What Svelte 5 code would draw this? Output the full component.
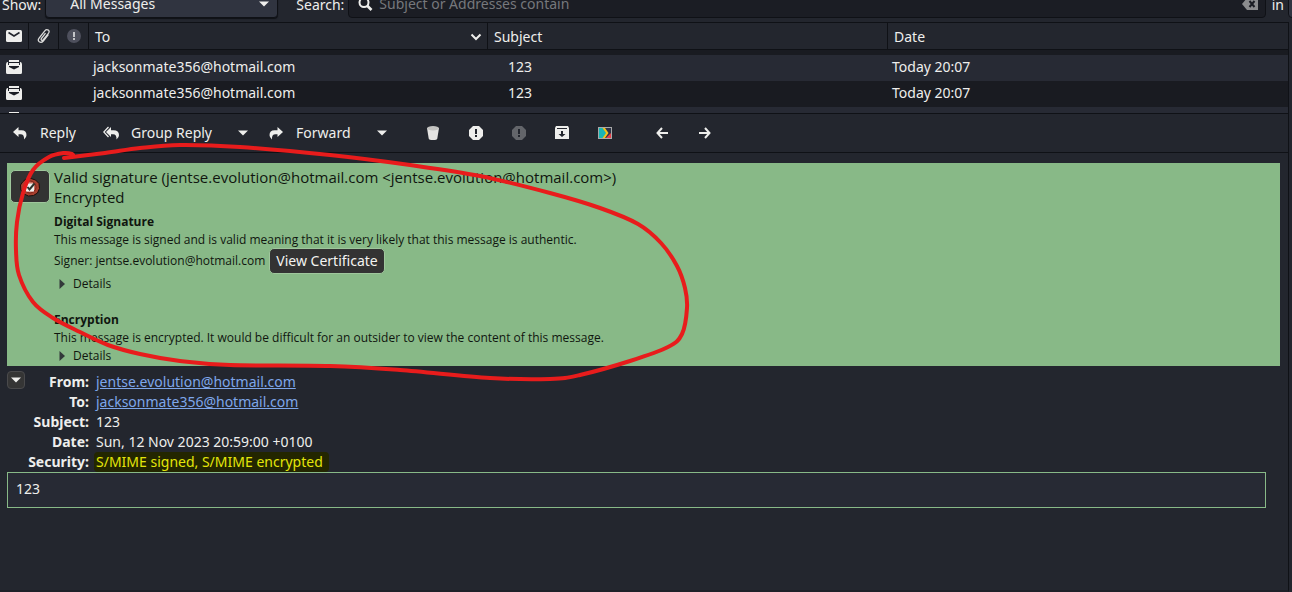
<script>
  const messages = [
    { to: 'jacksonmate356@hotmail.com', subject: '123', date: 'Today 20:07' },
    { to: 'jacksonmate356@hotmail.com', subject: '123', date: 'Today 20:07' },
    { to: '', subject: '', date: '' }
  ];

  // Points of the freehand marker loop, joined by a smooth curve.
  const loop = [
    [73, 156], [72, 154], [64, 153], [49, 157], [33, 170], [23, 193], [17, 222], [16, 250],
    [19, 275], [33, 302], [53, 318], [80, 332], [108, 345], [140, 354], [180, 361], [230, 365],
    [330, 366], [400, 370], [490, 378], [550, 379], [580, 375], [630, 361], [668, 347],
    [682, 334], [687, 308], [685, 288], [677, 266], [661, 243], [638, 224], [600, 208],
    [550, 193], [480, 176], [410, 165], [330, 155], [240, 147], [180, 145], [140, 148],
    [105, 153], [64, 158]
  ];

  function smooth(points) {
    let d = `M${points[0].join(' ')}`;
    for (let i = 0; i < points.length - 1; i++) {
      const a = points[i - 1] ?? points[i];
      const b = points[i];
      const c = points[i + 1];
      const e = points[i + 2] ?? c;
      d += `C${b[0] + (c[0] - a[0]) / 6} ${b[1] + (c[1] - a[1]) / 6} ${c[0] - (e[0] - b[0]) / 6} ${c[1] - (e[1] - b[1]) / 6} ${c[0]} ${c[1]}`;
    }
    return d;
  }
</script>

{#snippet openMail()}
  <svg class="icon" viewBox="0 0 16 16" aria-hidden="true">
    <path d="M3 1h10v2H3z" fill="#eeeeec" />
    <path d="M0 5.500Q0 3 1.500 3H2v3h12V3h.5Q16 3 16 5.500v8q0 1.500-1.500 1.500h-13Q0 15 0 13.500z" fill="#eeeeec" />
    <path d="M3 4h10v2H3z" fill="#eeeeec" />
    <path d="M3 3h10v1H3z" fill="#1b1d24" />
    <path d="M3 7h10v1l-5 2.500L3 8z" fill="#1b1d24" />
  </svg>
{/snippet}

{#snippet caret()}
  <svg class="caret" viewBox="0 0 10 6" aria-hidden="true"><path d="M0 .5h10L5 5.500z" fill="#eeeeec" /></svg>
{/snippet}

<div class="window">
  <div class="filters">
    <label for="show">Show:</label>
    <div class="combo">
      <select id="show"><option>All Messages</option></select>
      {@render caret()}
    </div>
    <label class="search-label" for="search">Search:</label>
    <div class="search">
      <svg class="icon" viewBox="0 0 16 16" aria-hidden="true">
        <circle cx="7" cy="6.500" r="4.500" fill="none" stroke="#eeeeec" stroke-width="2" />
        <path d="M10 9.500l4.500 4.500" stroke="#eeeeec" stroke-width="2.600" />
      </svg>
      <input id="search" type="text" placeholder="Subject or Addresses contain" />
      <button class="clear" aria-label="Clear">
        <svg class="icon" viewBox="0 0 16 16" aria-hidden="true">
          <path d="M0 8l5-6h11v12H5z" fill="#8b8c8e" />
          <path d="M7.500 5l5 6M12.500 5l-5 6" stroke="#1b1d24" stroke-width="2" />
        </svg>
      </button>
    </div>
    <span class="in">in</span>
    <button class="scope" aria-label="Search scope"></button>
  </div>

  <div class="body">
    <div class="list">
      <table>
        <colgroup>
          <col class="c-status" /><col class="c-flag" /><col class="c-flag" />
          <col class="c-to" /><col class="c-subject" /><col />
        </colgroup>
        <thead>
          <tr>
            <th class="mark" aria-label="Status">
              <svg class="icon" viewBox="0 0 16 16" aria-hidden="true">
                <rect y="2" width="16" height="12" rx="1.500" fill="#eeeeec" />
                <path d="M2.500 4.500L8 8l5.500-3.500" fill="none" stroke="#22252d" stroke-width="1.600" />
              </svg>
            </th>
            <th class="mark" aria-label="Attachment">
              <svg class="icon" viewBox="0 0 16 16" aria-hidden="true">
                <path d="M13.300 6.500L8.300 13q-2 2.300-4 .8-1.900-1.500-.2-3.700L9.800 2.800q1.700-2 3.500-.7 1.600 1.300.1 3.300L8.300 11.700q-.9 1-1.800.4-.8-.7 0-1.800L10.500 5.200" fill="none" stroke="#dcdcdb" stroke-width="1.300" />
              </svg>
            </th>
            <th class="mark" aria-label="Importance">
              <svg class="icon" viewBox="0 0 16 16" aria-hidden="true">
                <circle cx="9" cy="8" r="7" fill="#4e505d" />
                <path d="M8 4h2v5H8zM8 10h2v2H8z" fill="#c4c5c9" />
              </svg>
            </th>
            <th>
              <div class="sort">
                <span>To</span>
                <svg class="chevron" viewBox="0 0 12 8" aria-hidden="true"><path d="M1.500 1.500L6 6l4.500-4.500" fill="none" stroke="#eeeeec" stroke-width="2" /></svg>
              </div>
            </th>
            <th>Subject</th>
            <th>Date</th>
          </tr>
        </thead>
        <tbody>
          <tr class="edge" aria-hidden="true"><td colspan="6"></td></tr>
          {#each messages as m}
            <tr>
              <td class="mark">{@render openMail()}</td>
              <td></td>
              <td></td>
              <td>{m.to}</td>
              <td class="subject">{m.subject}</td>
              <td>{m.date}</td>
            </tr>
          {/each}
        </tbody>
      </table>
    </div>

    <div class="toolbar">
      <button class="reply">
        <svg class="icon" viewBox="0 0 16 16" aria-hidden="true">
          <path d="M1 7l5.500-5v3.200h3q5 0 5 5 0 2.300-2.500 4.300.5-5.300-3.500-5.300h-2V12z" fill="#eeeeec" />
        </svg>
        Reply
      </button>
      <button class="group">
        <svg class="icon" viewBox="0 0 16 16" aria-hidden="true">
          <path d="M5.500 2L.8 7l4.700 5" fill="none" stroke="#eeeeec" stroke-width="1.300" />
          <path d="M3 7l5-5v3.200h2.500q5.500 0 5.500 5 0 2.300-2.500 4.300.3-5.300-3.500-5.300H8V12z" fill="#eeeeec" />
        </svg>
        Group Reply
      </button>
      <button class="drop" aria-label="Group reply options">{@render caret()}</button>
      <button class="forward">
        <svg class="icon" viewBox="0 0 16 16" aria-hidden="true">
          <path d="M15 7L9.500 2v3.200h-3q-5 0-5 5 0 2.300 2.500 4.300-.5-5.300 3.500-5.300h2V12z" fill="#eeeeec" />
        </svg>
        Forward
      </button>
      <button class="drop" aria-label="Forward options">{@render caret()}</button>
      <div class="tools">
        <button aria-label="Delete">
          <svg class="icon" viewBox="0 0 16 16" aria-hidden="true">
            <path d="M2 3l1.700 10.500q.3 1.500 4.300 1.500t4.300-1.500L14 3z" fill="#e4e4e2" />
            <ellipse cx="8" cy="3.200" rx="6" ry="2.200" fill="#c3c3c1" />
          </svg>
        </button>
        <button aria-label="Junk">
          <svg class="icon" viewBox="0 0 16 16" aria-hidden="true">
            <path d="M5 1h6l4 4v6l-4 4H5l-4-4V5z" fill="#eeeeec" />
            <path d="M7 4h2v5H7zM7 10h2v2H7z" fill="#22252d" />
          </svg>
        </button>
        <button aria-label="Not junk">
          <svg class="icon" viewBox="0 0 16 16" aria-hidden="true">
            <path d="M5 1h6l4 4v6l-4 4H5l-4-4V5z" fill="#63656a" />
            <path d="M7 4h2v5H7zM7 10h2v2H7z" fill="#22252d" />
          </svg>
        </button>
        <button aria-label="Archive">
          <svg class="icon" viewBox="0 0 16 16" aria-hidden="true">
            <path d="M1 3l1-2h12l1 2v11H1z" fill="#eeeeec" />
            <path d="M3 3h10v1H3zM7 6h2v3h2.500L8 12 4.500 9H7z" fill="#22252d" />
          </svg>
        </button>
        <button aria-label="Redirect">
          <svg class="icon" viewBox="0 0 16 16" aria-hidden="true">
            <path d="M1 2h14v12H1z" fill="#a9a9a9" />
            <path d="M2 3h12v10H2z" fill="#2e3448" />
            <path d="M2 3h4l3.500 5L6 13H2z" fill="#19b5b5" />
            <path d="M5.500 3H8l3.500 5L8 13H5.500L9 8z" fill="#f5c21b" />
            <path d="M14 8v5h-5z" fill="#e8404a" />
          </svg>
        </button>
      </div>
      <div class="nav">
        <button aria-label="Previous message">
          <svg class="icon" viewBox="0 0 16 16" aria-hidden="true"><path d="M8 3L3.500 8 8 13M3 8h11" fill="none" stroke="#eeeeec" stroke-width="2" /></svg>
        </button>
        <button aria-label="Next message">
          <svg class="icon" viewBox="0 0 16 16" aria-hidden="true"><path d="M8 3l4.500 5L8 13M13 8H2" fill="none" stroke="#eeeeec" stroke-width="2" /></svg>
        </button>
      </div>
    </div>

    <div class="preview">
      <section class="security">
        <button class="seal" aria-label="Signature details">
          <svg viewBox="1 0 20 20" aria-hidden="true">
            <path d="M7 2l5-.5 4.500 1.500 3.500 3.500.5 5-2 4.500-4 2.500-5 .5-4.500-2L1.800 13l-.3-5L4 4.500z" fill="#a8402f" stroke="#1d0d0b" />
            <circle cx="11" cy="10" r="6" fill="#c9705f" stroke="#7c1c14" />
            <path d="M7 6.500h8v8H7z" fill="#f2f2f0" />
            <path d="M8.500 10l2 2.500L15.500 6.500" fill="none" stroke="#2d332c" stroke-width="2" />
          </svg>
        </button>
        <div class="details">
          <p class="lead">Valid signature (jentse.evolution@hotmail.com &lt;jentse.evolution@hotmail.com&gt;)</p>
          <p class="lead">Encrypted</p>
          <h2>Digital Signature</h2>
          <p>This message is signed and is valid meaning that it is very likely that this message is authentic.</p>
          <div class="signer">
            <span>Signer: jentse.evolution@hotmail.com</span>
            <button class="cert">View Certificate</button>
          </div>
          <button class="expander">
            <svg viewBox="0 0 6 10" aria-hidden="true"><path d="M.5 0L6 5 .5 10z" fill="#33393a" /></svg>Details
          </button>
          <h2 class="second">Encryption</h2>
          <p>This message is encrypted. It would be difficult for an outsider to view the content of this message.</p>
          <button class="expander">
            <svg viewBox="0 0 6 10" aria-hidden="true"><path d="M.5 0L6 5 .5 10z" fill="#33393a" /></svg>Details
          </button>
        </div>
      </section>

      <section class="headers">
        <button class="collapse" aria-label="Collapse headers">{@render caret()}</button>
        <dl>
          <dt>From:</dt><dd><a href="mailto:jentse.evolution@hotmail.com">jentse.evolution@hotmail.com</a></dd>
          <dt>To:</dt><dd><a href="mailto:jacksonmate356@hotmail.com">jacksonmate356@hotmail.com</a></dd>
          <dt>Subject:</dt><dd>123</dd>
          <dt>Date:</dt><dd>Sun, 12 Nov 2023 20:59:00 +0100</dd>
          <dt>Security:</dt><dd><mark>S/MIME signed, S/MIME encrypted</mark></dd>
        </dl>
      </section>

      <div class="message">123</div>
    </div>
  </div>

  <svg class="scribble" width="700" height="390" viewBox="0 0 700 390" aria-hidden="true">
    <path d={smooth(loop)} fill="none" stroke="#e81c1c" stroke-width="4" stroke-linecap="round" stroke-linejoin="round" />
  </svg>
</div>

<style>
  :global(body) {
    margin: 0;
    background: #23262e;
  }
  .window {
    position: relative;
    display: flex;
    flex-direction: column;
    min-height: 100vh;
    box-sizing: border-box;
    overflow: hidden;
    background: #23262e;
    color: #eeeeec;
    font: 14px/20px 'Noto Sans', sans-serif;
  }
  button, select, input {
    margin: 0;
    padding: 0;
    border: 0;
    background: none;
    color: inherit;
    font: inherit;
  }
  p, h2, dl, dd { margin: 0; }
  .icon { display: block; width: 16px; height: 16px; flex: none; }
  .caret { display: block; width: 10px; height: 6px; flex: none; }

  .filters {
    display: flex;
    align-items: flex-end;
    height: 22px;
    padding-left: 2px;
    white-space: nowrap;
  }
  .filters label, .in { line-height: 20px; margin-bottom: 7px; }
  .combo, .search, .scope {
    display: flex;
    align-items: center;
    box-sizing: border-box;
    height: 28px;
    margin-bottom: 4px;
    border: 1px solid #0f1116;
    border-radius: 4px;
  }
  .combo {
    flex: none;
    width: 233px;
    margin-left: 4px;
    padding: 0 8px 0 24px;
    background: #303440;
    box-shadow: 0 1px 1px #0f1116;
  }
  .combo select { flex: 1; appearance: none; }
  .search-label { margin-left: 18px; }
  .search {
    flex: 1;
    margin-left: 4px;
    padding: 0 7px 0 8px;
    gap: 6px;
    background: #1b1d24;
  }
  .search input { flex: 1; min-width: 0; }
  .search input::placeholder { color: #76787c; opacity: 1; }
  .in { margin-left: 6px; }
  .scope { width: 12px; margin-left: 4px; margin-right: -8px; background: #303440; }

  .body {
    flex: 1;
    margin-right: 3px;
    border-top: 1px solid #0f1116;
    border-right: 1px solid #0f1116;
    border-bottom: 2px solid #1e2028;
  }
  .list { height: 90px; overflow: hidden; border-bottom: 1px solid #0f1116; }
  table { width: 100%; table-layout: fixed; border-spacing: 0; }
  .c-status { width: 29px; }
  .c-flag { width: 30px; }
  .c-to { width: 399px; }
  .c-subject { width: 400px; }
  th {
    height: 24px;
    padding: 2px 5px 0 6px;
    border-right: 1px solid #0f1116;
    border-bottom: 1px solid #0f1116;
    font-weight: 400;
    text-align: left;
  }
  th:last-child { border-right: 0; }
  td { height: 24px; padding: 0 4px 2px; background: #272a34; white-space: nowrap; }
  tr:nth-child(odd) td { background: #191b21; }
  .edge td { height: 5px; padding: 0; }
  th.mark { height: 26px; padding: 0 0 0 6px; }
  td.mark { padding: 0 0 2px 6px; }
  td.subject { padding-left: 20px; }
  .sort { display: flex; align-items: center; justify-content: space-between; }
  .chevron { width: 12px; height: 8px; }

  .toolbar {
    display: flex;
    align-items: center;
    height: 38px;
    padding-left: 12px;
    border-bottom: 1px solid #0f1116;
    white-space: nowrap;
  }
  .toolbar button { display: flex; align-items: center; gap: 12px; }
  .toolbar .group { margin-left: 27px; }
  .toolbar .drop { margin-left: 26px; }
  .toolbar .forward { margin-left: 20px; }
  .tools, .nav { display: flex; gap: 27px; }
  .tools { margin-left: 38px; }
  .nav { margin-left: 41px; }

  .preview { padding: 10px 8px 10px 7px; }
  .security {
    display: flex;
    align-items: flex-start;
    gap: 4px;
    padding: 4px 4px 1px 3px;
    background: #88b987;
    color: #10160f;
    font-family: 'Open Sans', sans-serif;
    font-size: 12px;
    line-height: 18px;
  }
  .seal, .cert {
    border: 1px solid #9fc79c;
    border-radius: 5px;
    background: #333333;
    color: #f3f3f1;
  }
  .seal {
    display: flex;
    align-items: center;
    justify-content: center;
    width: 40px;
    height: 33px;
    margin-top: 3px;
    flex: none;
  }
  .seal svg { width: 20px; height: 20px; flex: none; }
  .lead { font-size: 15px; line-height: 20px; }
  h2 { margin-top: 6px; font-size: 12px; line-height: 18px; }
  h2.second { margin-top: 18px; }
  .signer { display: flex; align-items: center; gap: 4px; height: 24px; }
  .cert { height: 26px; padding: 0 6px; font-family: 'Noto Sans', sans-serif; font-size: 14px; line-height: 20px; }
  .expander { display: flex; align-items: center; gap: 8px; padding-left: 5px; }
  .signer + .expander { margin-top: 2px; }
  .expander svg { width: 6px; height: 10px; }

  .headers { display: flex; align-items: flex-start; padding-top: 5px; }
  .collapse {
    display: flex;
    align-items: center;
    justify-content: center;
    box-sizing: border-box;
    width: 18px;
    height: 18px;
    border: 1px solid #4a4a4c;
    border-radius: 4px;
    background: #353535;
  }
  dl { display: grid; grid-template-columns: 64px auto; column-gap: 7px; margin-top: 1px; }
  dt { font-weight: 700; text-align: right; white-space: nowrap; }
  a { color: #7ea6ea; text-decoration: underline; }
  mark {
    display: block;
    margin: 0 -6px 0 -2px;
    padding: 0 6px 0 2px;
    border-radius: 4px;
    background: #232600;
    color: #e3e50a;
  }
  .message {
    margin-right: 14px;
    padding: 6px 8px 8px;
    border: 1px solid #88b987;
    background: #272a34;
  }
  .scribble { position: absolute; left: 0; top: 0; pointer-events: none; }
</style>
